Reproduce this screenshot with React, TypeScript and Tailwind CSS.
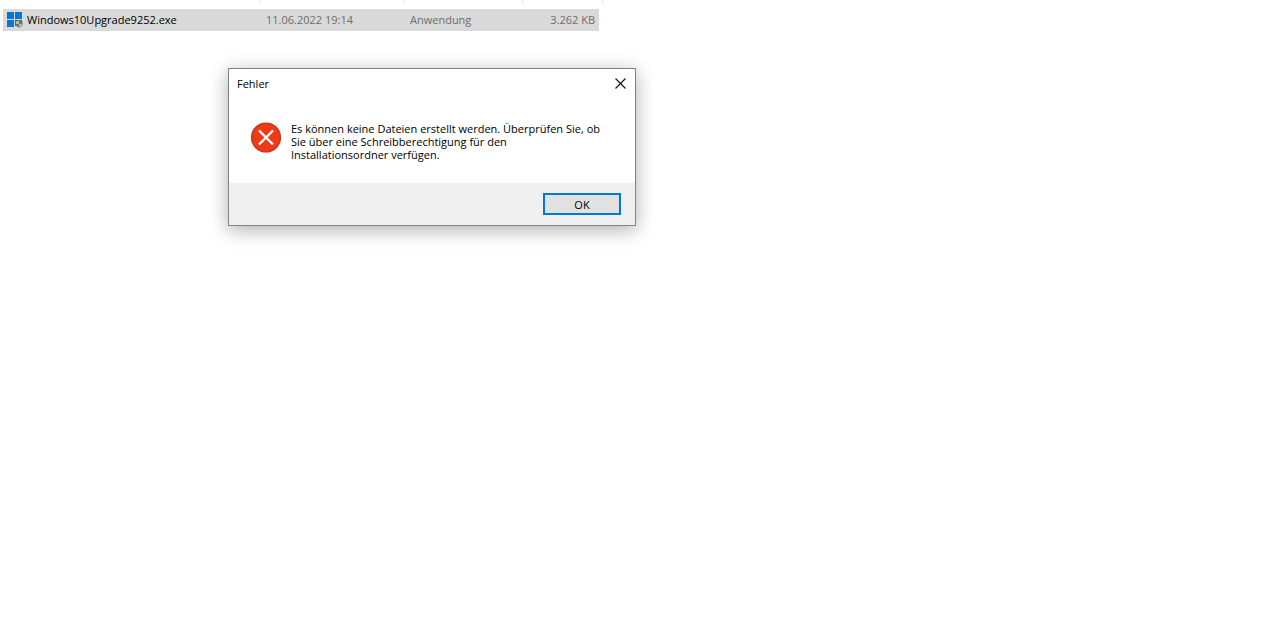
const SetupIcon = () => (
  <svg viewBox="0 0 16 16" className="h-4 w-4 shrink-0" aria-hidden="true">
    <path d="M0 0h7v7H0zM8 0h7v7H8zM0 8h7v7H0zM8 8h7v6H8z" fill="#0078d7" />
    {/* admin shield */}
    <path d="M12 8.5l3.5 1v2.8q0 2.2-3.5 3.5-3.2-1.3-3.2-3.5V9.5z" fill="#3f7fae" />
    <path d="M12 8.5V12H9V9.5zM12 12h3.3q-.2 2.1-3.3 3.4z" fill="#f2b632" />
  </svg>
);

const ErrorIcon = () => (
  <svg viewBox="0 0 32 32" className="h-8 w-8 shrink-0" aria-hidden="true">
    <circle cx="16" cy="15.5" r="14.4" fill="#f03a17" stroke="#c5371c" strokeWidth="1.4" />
    <path d="M9 8.5l14 14M23 8.5l-14 14" stroke="#fff" strokeWidth="2.4" fill="none" />
  </svg>
);

const FileList = () => {
  return (
    <div className="pl-[3px]">
      <div className="flex h-[9px] items-start">
        <div className="h-[3px] w-[258px] border-r border-[#e5e5e5]" />
        <div className="h-[3px] w-[143px] border-r border-[#e5e5e5]" />
        <div className="h-[3px] w-[119px] border-r border-[#e5e5e5]" />
        <div className="h-[3px] w-20 border-r border-[#e5e5e5]" />
      </div>
      <table className="w-[596px] table-fixed text-left text-[11px] text-[#6d6d6d]">
        <tbody>
          <tr className="h-[22px] bg-[#d9d9d9]">
            <td className="w-[258px] pl-1 text-black">
              <div className="flex items-center gap-1">
                <SetupIcon />
                <span>Windows10Upgrade9252.exe</span>
              </div>
            </td>
            <td className="w-[143px] pl-[5px]">11.06.2022 19:14</td>
            <td className="w-[119px] pl-1.5">Anwendung</td>
            <td className="pr-1 text-right">3.262 KB</td>
          </tr>
        </tbody>
      </table>
    </div>
  );
};

const ErrorDialog = () => {
  return (
    <div
      role="alertdialog"
      aria-labelledby="dialog-title"
      aria-describedby="dialog-text"
      className="absolute left-[228px] top-[68px] w-[408px] border border-[#828282] bg-white shadow-[0_4px_18px_rgba(0,0,0,0.32)]"
    >
      <div className="flex h-[30px] items-start justify-between pl-2">
        <h1 id="dialog-title" className="text-[11px] leading-[30px]">
          Fehler
        </h1>
        <button
          type="button"
          aria-label="Schließen"
          className="flex h-7 w-[30px] items-center justify-center"
        >
          <svg viewBox="0 0 11 11" className="h-[11px] w-[11px]" aria-hidden="true">
            <path d="M.5 .5l10 10M10.5 .5l-10 10" stroke="#111" strokeWidth="1.1" />
          </svg>
        </button>
      </div>
      <div className="flex gap-[9px] pb-[22px] pl-[21px] pr-6 pt-[23px]">
        <ErrorIcon />
        <p id="dialog-text" className="text-[11px] leading-[13px]">
          Es können keine Dateien erstellt werden. Überprüfen Sie, ob
          <br />
          Sie über eine Schreibberechtigung für den
          <br />
          Installationsordner verfügen.
        </p>
      </div>
      <div className="flex justify-end bg-[#efefef] px-[14px] py-[10px]">
        <button
          type="button"
          className="h-[22px] w-[78px] border-2 border-[#0078d7] bg-[#e1e1e1] text-[11px] leading-none"
        >
          OK
        </button>
      </div>
    </div>
  );
};

const App = () => {
  return (
    <main className="relative min-h-screen overflow-hidden bg-white font-['Open_Sans','Noto_Sans',sans-serif] text-black">
      <FileList />
      <ErrorDialog />
    </main>
  );
};

export default App;
